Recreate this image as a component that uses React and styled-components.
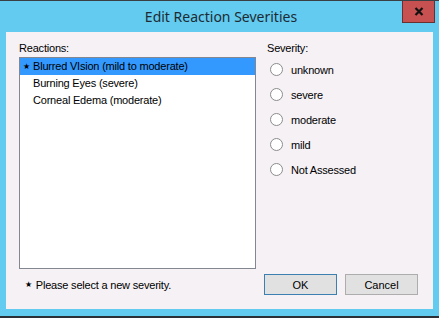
import React from "react";
import styled, { createGlobalStyle } from "styled-components";

const Global = createGlobalStyle`
  html, body { margin: 0; padding: 0; background: #62cbef; }
  body { font-family: "Liberation Sans", Arial, sans-serif; }
`;

const Frame = styled.div`
  width: 439px;
  height: 318px;
  box-sizing: border-box;
  background: #62cbef;
  border-top: 1px solid #3a3f44;
  border-bottom: 2px solid #2b3036;
  display: flex;
  flex-direction: column;
`;

const TitleBar = styled.div`
  height: 31px;
  display: flex;
  align-items: flex-start;
  position: relative;
`;

const Title = styled.div`
  flex: 1;
  text-align: center;
  font-family: "Noto Sans", "Open Sans", sans-serif;
  font-size: 14px;
  line-height: 31px;
  color: #1e2a33;
  padding-left: 3px;
`;

const CloseButton = styled.div`
  position: absolute;
  top: 0;
  right: 4px;
  width: 33px;
  height: 22px;
  box-sizing: border-box;
  background: #c75050;
  border: 1px solid #6b2f2f;
  border-top: none;
  display: flex;
  align-items: center;
  justify-content: center;
`;

const Client = styled.div`
  margin: 0 6px 7px 6px;
  flex: 1;
  background: #f5f1f5;
  box-sizing: border-box;
  padding: 10px 15px 0 13px;
  display: flex;
  flex-direction: column;
  font-size: 11px;
  color: #000;
`;

const Columns = styled.div`
  display: flex;
  gap: 11px;
`;

const LeftCol = styled.div`
  width: 237px;
  display: flex;
  flex-direction: column;
`;

const RightCol = styled.div`
  flex: 1;
  display: flex;
  flex-direction: column;
`;

const Label = styled.div`
  line-height: 13px;
  height: 13px;
  margin-bottom: 2px;
  letter-spacing: -0.2px;
`;

const ListBox = styled.div`
  height: 212px;
  box-sizing: border-box;
  border: 1px solid #828790;
  background: #fff;
`;

const Row = styled.div`
  height: 17px;
  line-height: 17px;
  display: flex;
  align-items: center;
  background: ${p => (p.$selected ? "#3399ff" : "transparent")};
  letter-spacing: -0.2px;
`;

const Mark = styled.span`
  width: 13px;
  flex: none;
  text-align: center;
  font-size: 8px;
`;

const RadioList = styled.div`
  display: flex;
  flex-direction: column;
`;

const RadioRow = styled.label`
  height: 25px;
  display: flex;
  align-items: center;
  gap: 8px;
  padding-left: 3px;
  letter-spacing: -0.2px;
`;

const Circle = styled.span`
  width: 13px;
  height: 13px;
  box-sizing: border-box;
  border-radius: 50%;
  border: 1px solid #8c8c8c;
  background: #fff;
  flex: none;
`;

const Footer = styled.div`
  margin-top: 5px;
  display: flex;
  align-items: center;
  height: 21px;
`;

const Note = styled.div`
  flex: 1;
  display: flex;
  align-items: center;
  padding-left: 6px;
  gap: 4px;
  letter-spacing: -0.2px;
`;

const Star = styled.span`
  font-size: 8px;
`;

const Buttons = styled.div`
  display: flex;
  gap: 8px;
`;

const Button = styled.div`
  width: 73px;
  height: 21px;
  box-sizing: border-box;
  border: 1px solid ${p => (p.$default ? "#3c7fb1" : "#adadad")};
  background: #e1e1e1;
  display: flex;
  align-items: center;
  justify-content: center;
`;

const reactions = [
  { name: "Blurred VIsion (mild to moderate)", marked: true },
  { name: "Burning Eyes (severe)" },
  { name: "Corneal Edema (moderate)" },
];

const severities = ["unknown", "severe", "moderate", "mild", "Not Assessed"];

export default function App() {
  return (
    <>
      <Global />
      <Frame>
        <TitleBar>
          <Title>Edit Reaction Severities</Title>
          <CloseButton>
            <svg width="10" height="9" viewBox="0 0 10 9">
              <path d="M1.5 1 L8.5 8 M8.5 1 L1.5 8" stroke="#111" strokeWidth="2.2" />
            </svg>
          </CloseButton>
        </TitleBar>
        <Client>
          <Columns>
            <LeftCol>
              <Label>Reactions:</Label>
              <ListBox>
                {reactions.map((r, i) => (
                  <Row key={r.name} $selected={i === 0}>
                    <Mark>{r.marked ? "★" : ""}</Mark>
                    {r.name}
                  </Row>
                ))}
              </ListBox>
            </LeftCol>
            <RightCol>
              <Label>Severity:</Label>
              <RadioList>
                {severities.map(s => (
                  <RadioRow key={s}>
                    <Circle />
                    {s}
                  </RadioRow>
                ))}
              </RadioList>
            </RightCol>
          </Columns>
          <Footer>
            <Note>
              <Star>★</Star>
              Please select a new severity.
            </Note>
            <Buttons>
              <Button $default>OK</Button>
              <Button>Cancel</Button>
            </Buttons>
          </Footer>
        </Client>
      </Frame>
    </>
  );
}
